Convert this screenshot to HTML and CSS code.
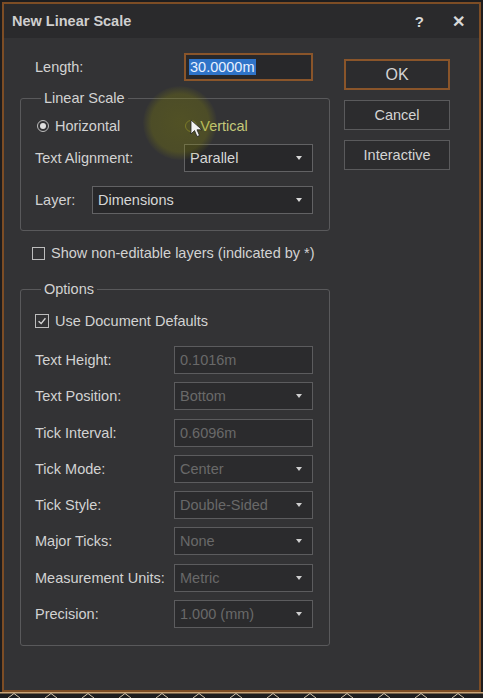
FILE: index.html
```html
<!DOCTYPE html>
<html>
<head>
<meta charset="utf-8">
<link rel="stylesheet" href="styles.css">
</head>
<body>
<div class="screen">
  <div class="dialog">
    <div class="titlebar">
      <span class="title">New Linear Scale</span>
      <span class="tb-btns"><span class="help">?</span><span class="close">✕</span></span>
    </div>
    <div class="body">
      <div class="main">
        <div class="length-row">
          <span class="lbl">Length:</span>
          <div class="field input active"><span class="sel">30.0000m</span></div>
        </div>

        <fieldset class="group linear">
          <legend>Linear Scale</legend>
          <div class="radio-row">
            <span class="radio-item"><span class="radio on"></span><span>Horizontal</span></span>
            <span class="radio-item vert"><span class="radio"></span><span class="vtext">Vertical</span></span>
          </div>
          <div class="frow align-row">
            <span class="lbl">Text Alignment:</span>
            <div class="field combo w129"><span>Parallel</span><span class="arrow"></span></div>
          </div>
          <div class="frow layer-row">
            <span class="lbl">Layer:</span>
            <div class="field combo wlayer"><span>Dimensions</span><span class="arrow"></span></div>
          </div>
        </fieldset>

        <div class="check-row show-row">
          <span class="check"></span><span>Show non-editable layers (indicated by *)</span>
        </div>

        <fieldset class="group options">
          <legend>Options</legend>
          <div class="check-row defaults-row">
            <span class="check on"><svg viewBox="0 0 14 14" width="14" height="14"><path d="M3 7.2 L6 10 L11 3.8" fill="none" stroke="#d6d6d6" stroke-width="1.6"/></svg></span><span>Use Document Defaults</span>
          </div>
          <div class="opt-grid">
            <span class="lbl">Text Height:</span>
            <div class="field input disabled"><span>0.1016m</span></div>
            <span class="lbl">Text Position:</span>
            <div class="field combo disabled"><span>Bottom</span><span class="arrow"></span></div>
            <span class="lbl">Tick Interval:</span>
            <div class="field input disabled"><span>0.6096m</span></div>
            <span class="lbl">Tick Mode:</span>
            <div class="field combo disabled"><span>Center</span><span class="arrow"></span></div>
            <span class="lbl">Tick Style:</span>
            <div class="field combo disabled"><span>Double-Sided</span><span class="arrow"></span></div>
            <span class="lbl">Major Ticks:</span>
            <div class="field combo disabled"><span>None</span><span class="arrow"></span></div>
            <span class="lbl">Measurement Units:</span>
            <div class="field combo disabled"><span>Metric</span><span class="arrow"></span></div>
            <span class="lbl">Precision:</span>
            <div class="field combo disabled"><span>1.000 (mm)</span><span class="arrow"></span></div>
          </div>
        </fieldset>
      </div>
      <div class="buttons">
        <div class="btn default">OK</div>
        <div class="btn">Cancel</div>
        <div class="btn">Interactive</div>
      </div>
    </div>
  </div>
  <div class="strip">
    <svg width="483" height="6" viewBox="0 0 483 6">
      <rect x="0" y="0" width="483" height="1.5" fill="#c9a57a"/>
      <g fill="none" stroke="#d8c8b0" stroke-width="1">
        <path d="M8 6 L14 1.5 L20 6"/><path d="M45 6 L51 1.5 L57 6"/><path d="M82 6 L88 1.5 L94 6"/>
        <path d="M119 6 L125 1.5 L131 6"/><path d="M156 6 L162 1.5 L168 6"/><path d="M193 6 L199 1.5 L205 6"/>
        <path d="M230 6 L236 1.5 L242 6"/><path d="M267 6 L273 1.5 L279 6"/><path d="M304 6 L310 1.5 L316 6"/>
        <path d="M341 6 L347 1.5 L353 6"/><path d="M378 6 L384 1.5 L390 6"/><path d="M415 6 L421 1.5 L427 6"/>
        <path d="M452 6 L458 1.5 L464 6"/>
      </g>
    </svg>
  </div>
  <div class="highlight"></div>
  <svg class="cursor" width="14" height="20" viewBox="0 0 14 20">
    <path d="M1 1 L1 15 L4.5 11.5 L7 17.5 L9.5 16.5 L7 10.8 L12 10.8 Z" fill="#f2f2f2" stroke="#222" stroke-width="0.8"/>
  </svg>
</div>
</body>
</html>
```

FILE: styles.css
```css
html, body {
  margin: 0;
  padding: 0;
  background: #1d1d1f;
}
.screen {
  position: relative;
  width: 483px;
  height: 698px;
  overflow: hidden;
  padding-top: 2px;
  box-sizing: border-box;
  font-family: "Liberation Sans", Arial, sans-serif;
  font-size: 14.5px;
  color: #d2d2d2;
}
.dialog {
  margin-left: 2px;
  width: 479px;
  height: 690px;
  box-sizing: border-box;
  border: 2px solid #7d4d25;
  background: #333335;
  display: flex;
  flex-direction: column;
}
.titlebar {
  height: 34px;
  flex: none;
  background: #2a2a2c;
  display: flex;
  align-items: center;
  justify-content: space-between;
  padding: 0 14px 0 8px;
}
.title {
  font-weight: bold;
  color: #cfcfcf;
  font-size: 14.5px;
}
.tb-btns {
  display: flex;
  align-items: center;
  gap: 28px;
  color: #d8d8d8;
  font-weight: bold;
}
.help { font-size: 15px; }
.close { font-size: 16px; }
.body {
  display: flex;
  align-items: flex-start;
  padding-top: 15px;
}
.main {
  margin-left: 16px;
  width: 310px;
  display: flex;
  flex-direction: column;
}
.length-row {
  display: flex;
  align-items: center;
  justify-content: space-between;
  padding: 0 17px 0 15px;
}
.field {
  height: 28px;
  box-sizing: border-box;
  border: 1px solid #626264;
  background: #28282a;
  display: flex;
  align-items: center;
  justify-content: space-between;
  padding: 0 10px 0 5px;
  color: #d6d6d6;
}
.field.input.active {
  width: 129px;
  border: 2px solid #8a552a;
  padding-left: 3px;
}
.sel {
  background: #2f74c8;
  color: #e8f0ff;
  padding: 0 1px;
}
.arrow {
  width: 0;
  height: 0;
  border-left: 3.5px solid transparent;
  border-right: 3.5px solid transparent;
  border-top: 4px solid #d8d8d8;
}
.group {
  margin: 0;
  border: 1px solid #59595b;
  border-radius: 3px;
  padding: 0 16px 0 14px;
}
.group legend {
  padding: 0 3px;
  margin-left: 6px;
  line-height: 16px;
  color: #d2d2d2;
}
.linear {
  margin-top: 9px;
  padding-bottom: 16px;
}
.radio-row {
  display: flex;
  align-items: center;
  height: 16px;
  margin-top: 12px;
}
.radio-item {
  display: flex;
  align-items: center;
  gap: 6px;
  margin-left: 2px;
}
.radio-item.vert {
  margin-left: 65px;
  gap: 3px;
}
.vtext { color: #c4c87a; }
.radio {
  width: 12px;
  height: 12px;
  border: 1px solid #bdbdbd;
  border-radius: 50%;
  box-sizing: border-box;
  display: flex;
  align-items: center;
  justify-content: center;
}
.radio.on::after {
  content: "";
  width: 6px;
  height: 6px;
  border-radius: 50%;
  background: #e0e0e0;
}
.vert .radio { border-color: #6f6e36; }
.frow {
  display: flex;
  align-items: center;
  justify-content: space-between;
}
.align-row { margin-top: 10px; }
.layer-row { margin-top: 14px; }
.w129 { width: 129px; }
.wlayer { width: 221px; }
.check-row {
  display: flex;
  align-items: center;
  gap: 6px;
}
.show-row {
  margin-top: 15px;
  margin-left: 12px;
  height: 14px;
}
.check {
  width: 13px;
  height: 13px;
  box-sizing: border-box;
  border: 1px solid #bdbdbd;
  display: flex;
  align-items: center;
  justify-content: center;
}
.check.on {
  width: 14px;
  height: 14px;
}
.check svg { display: block; }
.options {
  margin-top: 21px;
  padding-bottom: 17px;
}
.defaults-row {
  margin-top: 17px;
  height: 14px;
}
.opt-grid {
  margin-top: 18px;
  display: grid;
  grid-template-columns: 1fr 139px;
  grid-auto-rows: 28px;
  row-gap: 8.3px;
  align-items: center;
}
.field.disabled {
  color: #696969;
  border-color: #5c5c5e;
  background: #2b2b2d;
}
.field.disabled .arrow { border-top-color: #cfcfcf; }
.buttons {
  margin-left: 14px;
  margin-top: 6px;
  width: 106px;
  display: flex;
  flex-direction: column;
  gap: 10px;
}
.btn {
  height: 30px;
  box-sizing: border-box;
  border: 1px solid #5a5a5c;
  background: #2c2c2e;
  display: flex;
  align-items: center;
  justify-content: center;
  color: #d4d4d4;
  font-size: 14.5px;
}
.btn.default {
  height: 31px;
  border: 2px solid #8a552a;
  font-size: 16px;
}
.strip {
  height: 6px;
  overflow: hidden;
}
.strip svg { display: block; }
.highlight {
  position: absolute;
  left: 143px;
  top: 86px;
  width: 74px;
  height: 74px;
  border-radius: 50%;
  background: radial-gradient(circle, rgba(150,150,0,0.3) 0%, rgba(150,150,0,0.26) 55%, rgba(150,150,0,0) 72%);
  pointer-events: none;
}
.cursor {
  position: absolute;
  left: 190px;
  top: 119px;
}
```
